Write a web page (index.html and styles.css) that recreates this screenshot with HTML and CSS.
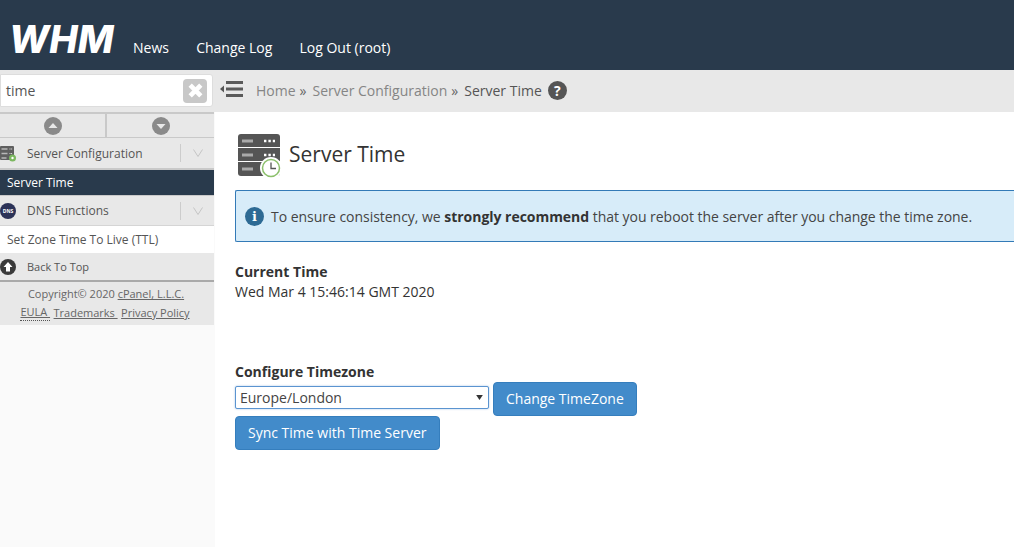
FILE: index.html
```html
<!DOCTYPE html>
<html lang="en">
<head>
<meta charset="utf-8">
<title>Server Time</title>
<link rel="stylesheet" href="styles.css">
</head>
<body>
<header class="topbar">
  <span class="logo">WHM</span>
  <nav class="topnav">
    <a>News</a>
    <a>Change Log</a>
    <a>Log Out (root)</a>
  </nav>
</header>
<div class="shell">
  <aside class="sidebar">
    <div class="searchwrap">
      <div class="searchbox">
        <span>time</span>
        <span class="clear"><svg width="17" height="17" viewBox="0 0 16 16"><path d="M3 3l10 10M13 3L3 13" stroke="#fff" stroke-width="4.4" stroke-linecap="butt"/></svg></span>
      </div>
    </div>
    <div class="arrows">
      <div class="arrowcell"><svg width="18" height="18" viewBox="0 0 18 18"><circle cx="9" cy="9" r="9" fill="#8a8a8a"/><path d="M4.5 11L9 6l4.500 5z" fill="#e8e8e8"/></svg></div>
      <div class="arrowcell"><svg width="18" height="18" viewBox="0 0 18 18"><circle cx="9" cy="9" r="9" fill="#8a8a8a"/><path d="M4.500 7L9 12l4.500-5z" fill="#e8e8e8"/></svg></div>
    </div>
    <div class="group first">
      <svg class="groupicon" width="16" height="17" viewBox="0 0 16 17"><rect y="1" width="14" height="14" rx="1" fill="#5f5f5f"/><path d="M1.500 4h6M1.500 8.500h6M1.500 13h5" stroke="#b8b8b8" stroke-width="1.500"/><path d="M9.500 4h3M9.500 8.500h3" stroke="#ddd" stroke-width="1.200" stroke-dasharray="1 .6"/><circle cx="12.500" cy="13" r="3.500" fill="#7cb860"/><circle cx="12.500" cy="13" r="1.200" fill="#fff"/></svg>
      <span class="grouplabel">Server Configuration</span>
      <span class="chev"><svg width="10" height="8" viewBox="0 0 10 8"><path d="M.5 .5L5 7.500 9.500 .5" fill="none" stroke="#c4c4c4"/></svg></span>
    </div>
    <div class="item active">Server Time</div>
    <div class="group">
      <svg class="groupicon" width="16" height="16" viewBox="0 0 16 16"><circle cx="8" cy="8" r="8" fill="#2c3358"/><text x="8" y="10" class="dnstext" text-anchor="middle">DNS</text></svg>
      <span class="grouplabel">DNS Functions</span>
      <span class="chev"><svg width="10" height="8" viewBox="0 0 10 8"><path d="M.5 .5L5 7.500 9.500 .5" fill="none" stroke="#c4c4c4"/></svg></span>
    </div>
    <div class="item">Set Zone Time To Live (TTL)</div>
    <div class="backtop">
      <svg width="16" height="16" viewBox="0 0 16 16"><circle cx="8" cy="8" r="8" fill="#3a3a3a"/><path d="M8 3l4.500 5H10v4.500H6V8H3.500z" fill="#fff"/></svg>
      <span>Back To Top</span>
    </div>
    <footer class="sidefoot">
      <div>Copyright© 2020 <a>cPanel, L.L.C.</a></div>
      <div class="footlinks"><a class="eula">EULA&nbsp;</a><a>Trademarks&nbsp;</a><a>Privacy Policy</a></div>
    </footer>
  </aside>
  <div class="main">
    <div class="crumbs">
      <svg class="menuicon" width="24" height="18" viewBox="0 0 24 18"><path d="M0 9l4-3.500v7z" fill="#555"/><path d="M6 2.500h17M6 9h17M6 15.500h17" stroke="#5a5a5a" stroke-width="3"/></svg>
      <a>Home</a><span class="sep">»</span>
      <a>Server Configuration</a><span class="sep">»</span>
      <span class="current">Server Time</span>
      <span class="help">?</span>
    </div>
    <main class="content">
      <div class="titlerow">
        <svg width="44" height="46" viewBox="0 0 44 46">
          <rect x="0" y="1" width="42" height="42" rx="3" fill="#555"/>
          <path d="M0 14.500h42M0 28.500h42" stroke="#fff" stroke-width="1.200"/>
          <path d="M4 8h11M4 22h11M4 36h11" stroke="#aaa" stroke-width="3"/>
          <path d="M26 8h11M26 22h11" stroke="#fff" stroke-width="2.400" stroke-dasharray="2.400 2"/>
          <circle cx="33" cy="35" r="11" fill="#fff"/>
          <circle cx="33" cy="35" r="8.500" fill="#fff" stroke="#8cc06c" stroke-width="1.500"/>
          <path d="M33 29.500V35.500H38" fill="none" stroke="#555" stroke-width="1.300"/>
        </svg>
        <h1>Server Time</h1>
      </div>
      <div class="notice">
        <span class="infoicon">i</span>
        <span>To ensure consistency, we <strong>strongly recommend</strong> that you reboot the server after you change the time zone.</span>
      </div>
      <section class="current-time">
        <h2>Current Time</h2>
        <div>Wed Mar 4 15:46:14 GMT 2020</div>
      </section>
      <section class="configure">
        <h2>Configure Timezone</h2>
        <div class="formrow">
          <div class="select"><span>Europe/London</span><svg width="7" height="5" viewBox="0 0 8 6"><path d="M0 0h8L4 6z" fill="#333"/></svg></div>
          <button class="btn" type="button">Change TimeZone</button>
        </div>
        <button class="btn wide" type="button">Sync Time with Time Server</button>
      </section>
    </main>
  </div>
</div>
</body>
</html>
```

FILE: styles.css
```css
* { box-sizing: border-box; }
html, body { height: 100%; }
body {
  margin: 0;
  background: #fff;
  color: #333;
  font-family: "Open Sans", "Liberation Sans", sans-serif;
  font-size: 14px;
  overflow: hidden;
}
a { color: inherit; }

.topbar {
  height: 70px;
  background: #293a4c;
  display: flex;
  align-items: flex-end;
  padding: 0 0 12px 12px;
  color: #fff;
}
.logo {
  font-family: "Inter", "Liberation Sans", sans-serif;
  font-weight: 800;
  font-style: italic;
  font-size: 38px;
  line-height: 34px;
  letter-spacing: 0;
  width: 104px;
  margin-left: -3px;
  margin-bottom: 2px;
}
.topnav { display: flex; gap: 27.2px; margin-left: 20px; line-height: 20px; }

.shell { display: flex; height: 477px; }

.sidebar {
  width: 215px;
  flex: none;
  background: #fafafa;
  font-size: 12px;
  color: #555;
  padding-right: 1px;
}
.searchwrap { background: #e8e8e8; height: 42px; padding: 4px 2px 5px 0; margin-right: -1px; }
.searchbox {
  height: 33px;
  background: #fff;
  border: 1px solid #ddd;
  border-radius: 0 3px 3px 0;
  display: flex;
  align-items: center;
  justify-content: space-between;
  padding: 0 5px;
  font-size: 14px;
  color: #555;
}
.clear {
  width: 24px;
  height: 24px;
  background: #c8c8c8;
  border-radius: 4px;
  display: flex;
  align-items: center;
  justify-content: center;
}
.arrows {
  display: flex;
  height: 26px;
  background: #e8e8e8;
  border-top: 2px solid #c9c9c9;
  border-bottom: 1px solid #c9c9c9;
}
.arrowcell {
  flex: 1;
  display: flex;
  align-items: center;
  justify-content: center;
}
.arrowcell:first-child { flex: 0 0 105px; }
.arrowcell + .arrowcell { border-left: 2px solid #c9c9c9; }
.group {
  height: 30px;
  background: #e8e8e8;
  display: flex;
  align-items: center;
  border-bottom: 1px solid #d5d5d5;
  color: #555;
}
.group.first { height: 32px; border-bottom: 2px solid #c9c9c9; }
.groupicon { flex: none; }
.grouplabel { margin-left: 11px; flex: 1; }
.chev {
  width: 34px;
  height: 18px;
  border-left: 1px solid #ccc;
  display: flex;
  align-items: center;
  justify-content: center;
  flex: none;
}
.item { height: 27px; line-height: 27px; padding-left: 7px; background: #fff; color: #555; }
.item.active {
  background: #293a4c;
  color: #fff;
  height: 26px;
  line-height: 25px;
  border-bottom: 1px solid #c9c9c9;
}
.backtop {
  height: 29px;
  background: #e8e8e8;
  display: flex;
  align-items: center;
  gap: 11px;
  font-size: 11px;
  color: #555;
  border-bottom: 2px solid #aaa;
}
.sidefoot {
  background: #e8e8e8;
  height: 43px;
  text-align: center;
  font-size: 11px;
  color: #666;
  line-height: 19px;
  padding: 2px 2px 0 0;
}
.sidefoot a { text-decoration: underline; }
.footlinks { display: flex; justify-content: center; gap: 3.5px; padding-right: 2px; letter-spacing: -0.02px; }
.eula { border-bottom: 1px dotted #555; line-height: 17px; height: 18px; }

.main { flex: 1; min-width: 0; }
.crumbs {
  height: 42px;
  background: #e8e8e8;
  display: flex;
  align-items: center;
  padding: 0 0 2px 5px;
  color: #858585;
}
.menuicon { margin-right: 12px; margin-top: -2px; }
.sep { color: #666; margin: 0 6px 0 4px; }
.current { color: #555; }
.help {
  width: 19px;
  height: 19px;
  border-radius: 50%;
  background: #555;
  color: #fff;
  font-weight: 700;
  font-size: 14px;
  line-height: 19px;
  text-align: center;
  margin-left: 6px;
}
.content { padding: 21px 0 0 20px; }
.titlerow { display: flex; align-items: center; gap: 7px; margin-left: 3px; height: 46px; }
h1 { margin: 0; padding-bottom: 4px; font-size: 21px; font-weight: 400; color: #333; line-height: 32px; }
.notice {
  margin-top: 11px;
  height: 52px;
  background: #d7ecf9;
  border: 1px solid #337ab7;
  border-right: 0;
  border-radius: 2px 0 0 2px;
  display: flex;
  align-items: center;
  gap: 7px;
  padding-left: 9px;
  white-space: nowrap;
  color: #444;
  letter-spacing: -0.03px;
}
.notice strong { color: #333; }
.infoicon {
  width: 19px;
  height: 19px;
  border-radius: 50%;
  background: #2d6a94;
  color: #fff;
  font: 700 13px/19px "DejaVu Serif", serif;
  text-align: center;
}
h2 { margin: 0; font-size: 14px; font-weight: 700; line-height: 20px; color: #333; }
.current-time { margin-top: 20px; }
.current-time div { line-height: 20px; }
.configure { margin-top: 60px; }
.formrow { display: flex; align-items: flex-start; gap: 4px; margin-top: 4px; }
.select {
  width: 254px;
  height: 23px;
  background: #fff;
  border: 1px solid #5b94d0;
  box-shadow: 0 0 2px rgba(91, 148, 208, .6);
  border-radius: 2px;
  display: flex;
  align-items: center;
  justify-content: space-between;
  padding: 0 5px 0 4px;
  color: #444;
}
.btn {
  display: block;
  height: 34px;
  padding: 0 12px 2px;
  background: #428bca;
  border: 1px solid #357ebd;
  border-radius: 4px;
  color: #fff;
  font: 400 14px "Open Sans", "Liberation Sans", sans-serif;
}
.formrow .btn { margin-top: -4px; }
.wide { padding-right: 13px; }
.dnstext { font: 700 5px "Open Sans", sans-serif; fill: #fff; }
```
